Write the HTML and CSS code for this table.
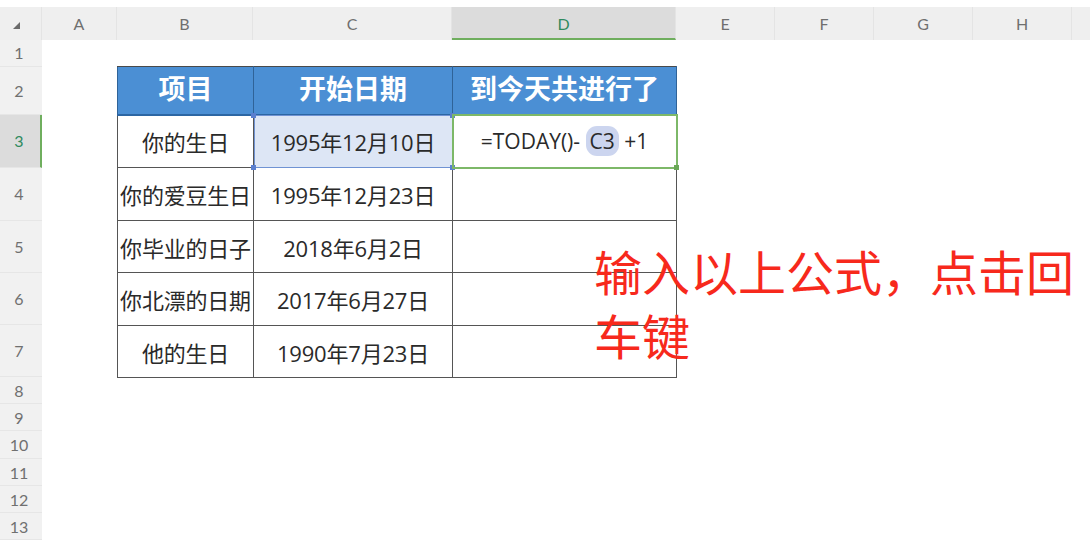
FILE: index.html
```html
<!DOCTYPE html>
<html lang="zh">
<head>
<meta charset="utf-8">
<title>Sheet</title>
<link rel="stylesheet" href="styles.css">
</head>
<body>
<div class="sheet">
  <div class="colheads">
    <div class="corner"><span class="tri"></span></div>
    <div class="ch w-a">A</div>
    <div class="ch w-b">B</div>
    <div class="ch w-c">C</div>
    <div class="ch w-d sel">D</div>
    <div class="ch w-e">E</div>
    <div class="ch w-e">F</div>
    <div class="ch w-e">G</div>
    <div class="ch w-e">H</div>
    <div class="ch rest"></div>
  </div>
  <div class="main">
    <div class="rowheads">
      <div class="rh h-s">1</div>
      <div class="rh h-2">2</div>
      <div class="rh h-l sel">3</div>
      <div class="rh h-l">4</div>
      <div class="rh h-m">5</div>
      <div class="rh h-l">6</div>
      <div class="rh h-m">7</div>
      <div class="rh h-s">8</div>
      <div class="rh h-s">9</div>
      <div class="rh h-s2">10</div>
      <div class="rh h-s">11</div>
      <div class="rh h-s">12</div>
      <div class="rh h-s">13</div>
    </div>
    <div class="canvas">
      <table class="data">
        <colgroup>
          <col class="cw-b"><col class="cw-c"><col class="cw-d">
        </colgroup>
        <thead>
          <tr class="tr-h">
            <th>项目</th><th>开始日期</th><th>到今天共进行了</th>
          </tr>
        </thead>
        <tbody>
          <tr class="tr-l">
            <td>你的生日</td>
            <td class="ref">1995年12月10日<span class="hd tl"></span><span class="hd tr"></span><span class="hd bl"></span><span class="hd br"></span></td>
            <td class="active">=TODAY()-&nbsp;<span class="pill">C3</span>&nbsp;+1<span class="gd"></span></td>
          </tr>
          <tr class="tr-l"><td>你的爱豆生日</td><td>1995年12月23日</td><td></td></tr>
          <tr class="tr-m"><td>你毕业的日子</td><td>2018年6月2日</td><td></td></tr>
          <tr class="tr-l"><td>你北漂的日期</td><td>2017年6月27日</td><td></td></tr>
          <tr class="tr-m"><td>他的生日</td><td>1990年7月23日</td><td></td></tr>
        </tbody>
      </table>
      <div class="note">输入以上公式，点击回<br>车键</div>
    </div>
  </div>
</div>
</body>
</html>
```

FILE: styles.css
```css
* { box-sizing: border-box; }
html, body { margin: 0; padding: 0; background: #ffffff; }
body {
  width: 1090px;
  height: 540px;
  overflow: hidden;
  font-family: "Noto Sans CJK SC", "Noto Sans", sans-serif;
}
.sheet { padding-top: 7px; }

.colheads {
  display: flex;
  height: 33px;
  background: #efefef;
}
.corner {
  width: 42px;
  position: relative;
  border-right: 1px solid #e4e4e4;
}
.tri {
  position: absolute;
  left: 13px;
  top: 15px;
  width: 0;
  height: 0;
  border-left: 7px solid transparent;
  border-bottom: 7px solid #6a6a6a;
}
.ch {
  display: flex;
  align-items: center;
  justify-content: center;
  font-family: "Lato", "Open Sans", sans-serif;
  font-size: 16px;
  color: #6f6f6f;
  border-right: 1px solid #e4e4e4;
}
.w-a { width: 75px; }
.w-b { width: 136px; }
.w-c { width: 199px; }
.w-d { width: 224px; }
.w-e { width: 99px; }
.rest { flex: 1; border-right: 0; }
.ch.sel {
  background: #dcdcdc;
  color: #2f8a5e;
  border-bottom: 2px solid #6fae5e;
  padding-top: 2px;
}

.main { display: flex; }
.rowheads {
  width: 42px;
  background: #f1f1f1;
  display: flex;
  flex-direction: column;
  height: 500px;
}
.rh {
  display: flex;
  align-items: center;
  justify-content: center;
  font-family: "Lato", "Open Sans", sans-serif;
  font-size: 16px;
  color: #707070;
  border-bottom: 1px solid #e6e6e6;
  padding-right: 4px;
}
.h-s { height: 27px; }
.h-s2 { height: 28px; }
.h-2 { height: 48px; }
.h-l { height: 53px; }
.h-m { height: 52px; }
.rh.sel {
  background: #dcdcdc;
  color: #2f8a5e;
  border-right: 2px solid #6fae5e;
  padding-right: 2px;
}

.canvas {
  flex: 1;
  position: relative;
  padding-top: 26px;
  padding-left: 75px;
}

.data {
  border-collapse: collapse;
  table-layout: fixed;
  width: 559px;
}
.cw-b { width: 136px; }
.cw-c { width: 199px; }
.cw-d { width: 224px; }
.data th, .data td {
  padding: 0;
  text-align: center;
  white-space: nowrap;
  border: 1.5px solid #555555;
}
.data th {
  background: #4b8fd4;
  color: #ffffff;
  font-weight: 700;
  font-size: 27px;
  padding-bottom: 5px;
  border-color: #2f6398;
  border-top-color: #4a4a4a;
  border-bottom: 2px solid #2c66a3;
}
.tr-h { height: 48px; }
.tr-l { height: 53px; }
.tr-m { height: 52px; }
.data td {
  font-family: "Open Sans", "Noto Sans CJK SC", sans-serif;
  font-size: 22px;
  color: #2a2a2a;
  position: relative;
  letter-spacing: -0.2px;
}
.data td.ref {
  background: #dde6f5;
  outline: 1.5px solid #7093d3;
  outline-offset: -1px;
}
.hd {
  position: absolute;
  width: 5px;
  height: 5px;
  background: #5b7fcf;
}
.hd.tl { left: -3px; top: -3px; }
.hd.tr { right: -3px; top: -3px; }
.hd.bl { left: -3px; bottom: -3px; }
.hd.br { right: -3px; bottom: -3px; }
.data td.active {
  outline: 2px solid #7db868;
  outline-offset: -1px;
  font-family: "Open Sans", "Noto Sans", sans-serif;
  font-size: 21px;
  color: #2a2a2a;
  letter-spacing: 0;
}
.gd {
  position: absolute;
  right: -3px;
  bottom: -3px;
  width: 5px;
  height: 5px;
  background: #6aa858;
}
.pill {
  background: #ccd5ef;
  border-radius: 11px;
  padding: 1px 4px;
}

.note {
  position: absolute;
  left: 552px;
  top: 198px;
  font-size: 48px;
  line-height: 64px;
  color: #f7291c;
  white-space: nowrap;
}
```
